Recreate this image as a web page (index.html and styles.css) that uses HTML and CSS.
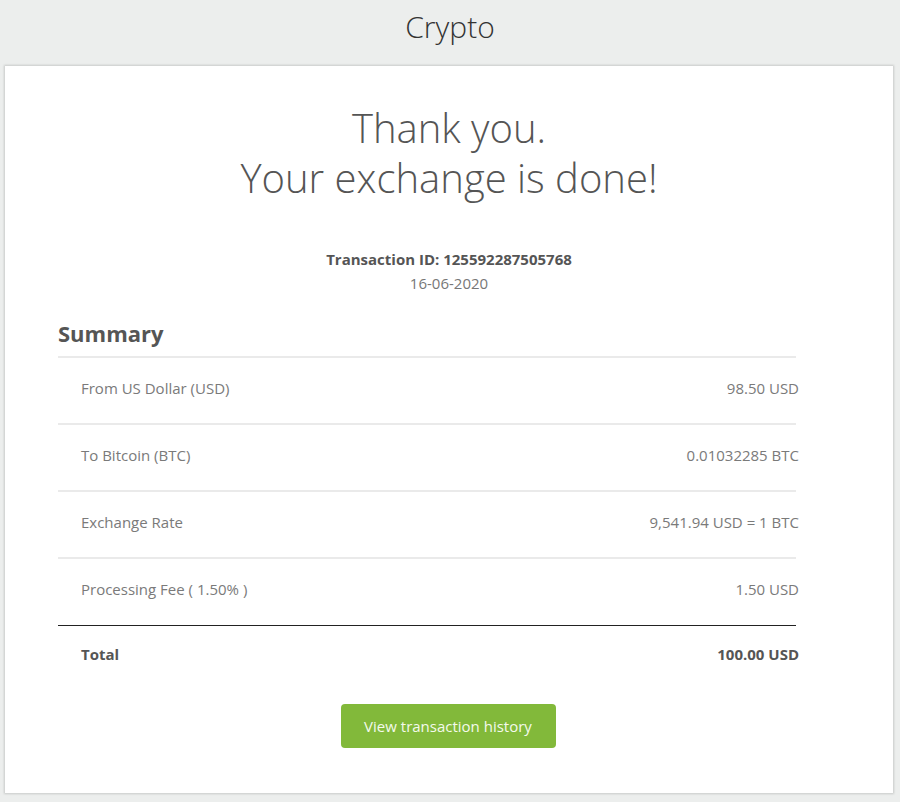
FILE: index.html
```html
<!DOCTYPE html>
<html>
<head>
<meta charset="utf-8">
<link rel="stylesheet" href="styles.css">
</head>
<body>
<header class="topbar"><h1 class="brand">Crypto</h1></header>
<main class="card">
  <h2 class="thanks">Thank you.<br>Your exchange is done!</h2>
  <div class="txn">
    <div class="txn-id">Transaction ID: 125592287505768</div>
    <div class="txn-date">16-06-2020</div>
  </div>
  <section class="summary">
    <h3 class="summary-title">Summary</h3>
    <div class="rows">
      <div class="row"><span>From US Dollar (USD)</span><span class="val">98.50 USD</span></div>
      <div class="row"><span>To Bitcoin (BTC)</span><span class="val">0.01032285 BTC</span></div>
      <div class="row"><span>Exchange Rate</span><span class="val">9,541.94 USD = 1 BTC</span></div>
      <div class="row last"><span>Processing Fee ( 1.50% )</span><span class="val">1.50 USD</span></div>
      <div class="row total"><span>Total</span><span class="val">100.00 USD</span></div>
    </div>
  </section>
  <div class="actions"><a class="btn" href="#">View transaction history</a></div>
</main>
</body>
</html>
```
FILE: styles.css
```css
* { box-sizing: border-box; }
html, body { margin: 0; padding: 0; }
body {
  background: #eceeed;
  font-family: "Open Sans", "Liberation Sans", sans-serif;
  color: #555;
  padding-bottom: 9px;
}
.topbar {
  height: 66px;
  display: flex;
  justify-content: center;
}
.brand {
  margin: 0;
  font-size: 30px;
  font-weight: 300;
  line-height: 54px;
  color: #333;
}
.card {
  margin: 0 7px 0 5px;
  background: #fff;
  box-shadow: 0 0 2px 1px rgba(0,0,0,0.15);
  padding: 37px 0 45px;
}
.thanks {
  margin: 0;
  text-align: center;
  font-size: 40px;
  font-weight: 300;
  line-height: 50px;
  color: #555;
}
.txn {
  margin-top: 44px;
  text-align: center;
  font-size: 15px;
  line-height: 24px;
}
.txn-id { font-weight: 700; color: #555; }
.txn-date { color: #777; font-weight: 400; }
.summary {
  margin: 18px 0 0 53px;
  width: 738px;
}
.summary-title {
  margin: 0;
  font-size: 22px;
  font-weight: 700;
  line-height: 40px;
  color: #555;
  padding-bottom: 3px;
  border-bottom: 2px solid #eaeaea;
}
.row {
  height: 67px;
  display: flex;
  align-items: center;
  justify-content: space-between;
  padding-left: 23px;
  padding-bottom: 6px;
  font-size: 15px;
  color: #7a7a7a;
  border-bottom: 2px solid #eaeaea;
}
.row .val { margin-right: -3px; }
.row.last { border-bottom: none; height: 66px; }
.row.total {
  border-top: 1px solid #222;
  border-bottom: none;
  font-weight: 700;
  color: #555;
  height: 60px;
  padding-bottom: 4px;
}
.actions {
  display: flex;
  justify-content: center;
  margin-top: 19px;
  padding-right: 2px;
}
.btn {
  display: flex;
  align-items: center;
  justify-content: center;
  width: 215px;
  height: 44px;
  background: #82b93a;
  border-radius: 4px;
  color: #f4f9ec;
  text-decoration: none;
  font-size: 15px;
  font-weight: 400;
}
```
